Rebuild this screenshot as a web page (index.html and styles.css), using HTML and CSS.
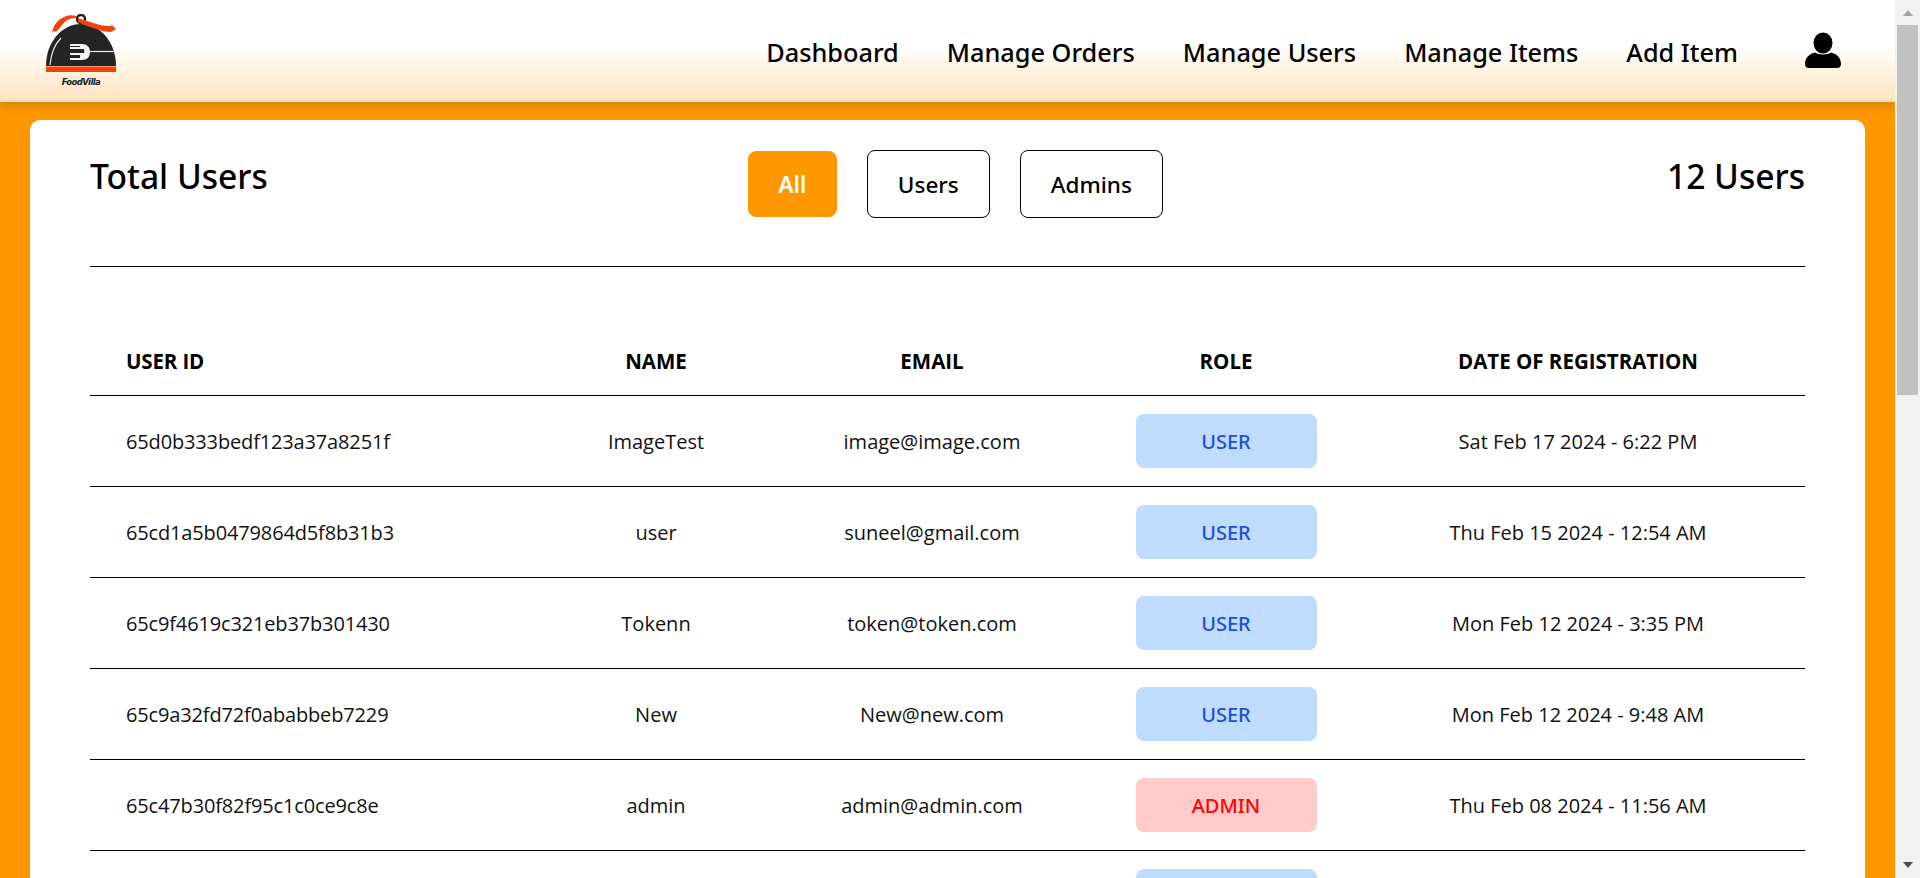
FILE: index.html
```html
<!DOCTYPE html>
<html lang="en">
<head>
    <meta charset="UTF-8">
    <meta name="viewport" content="width=device-width, initial-scale=1.0">
    <title>FoodVilla - Manage Users</title>
    <link rel="stylesheet" href="styles.css">
</head>
<body>
    <div class="page">
        <!-- Top bar -->
        <header class="navbar">
            <a class="logo" href="#">
                <svg class="logo-icon" viewBox="0 0 70 58" width="70" height="58">
                    <path d="M0 52C0 28 16 10 35 10S70 28 70 52Z" fill="#242424"/>
                    <circle cx="35" cy="5" r="4" fill="none" stroke="#222" stroke-width="2.5"/>
                    <path d="M6 19C7 12 11 6 18 3C22 1 26 1 30 2L30 4C25 4 20 6 17 10C14 13 12 16 10 18L8 17Z" fill="#f0440e"/>
                    <path d="M32 4C39 6 46 9 54 11C58 12 62 12 66 12L64 9 70 15 65 18C60 18 55 17 50 15C44 13 38 11 32 8Z" fill="#f0440e"/>
                    <path d="M4 51C5 40 9 30 15 24" fill="none" stroke="#eee" stroke-width="1.2"/>
                    <path d="M24 30H36C41 30 44 33 44 38S41 46 36 46H24V44H34V41H24V39H38C39 37 38 35 37 35H24V33H34V32H24Z" fill="#f4f4f4"/>
                    <path d="M44 37.500H68" stroke="#eee" stroke-width="1.2"/>
                    <rect x="0" y="52.500" width="70" height="5.500" fill="#f0440e"/>
                </svg>
                <span class="logo-text">FoodVilla</span>
            </a>
            <nav class="nav-links">
                <a href="#">Dashboard</a>
                <a href="#">Manage Orders</a>
                <a href="#">Manage Users</a>
                <a href="#">Manage Items</a>
                <a href="#">Add Item</a>
                <a class="user-link" href="#">
                    <svg viewBox="0 0 38 38" width="38" height="38">
                        <ellipse cx="19" cy="11" rx="9.5" ry="10.5" fill="#000"/>
                        <path d="M1 32C1 26 5 22 11 20.500 14 23 24 23 27 20.500 33 22 37 26 37 32 37 35 35 36 33 36H5C3 36 1 35 1 32Z" fill="#000"/>
                    </svg>
                </a>
            </nav>
        </header>

        <main class="content">
            <section class="card">
                <div class="card-head">
                    <h2 class="total-title">Total Users</h2>
                    <div class="filters">
                        <button class="filter active">All</button>
                        <button class="filter">Users</button>
                        <button class="filter">Admins</button>
                    </div>
                    <h2 class="total-count">12 Users</h2>
                </div>

                <table class="users-table">
                    <colgroup>
                        <col class="col-id">
                        <col class="col-name">
                        <col class="col-email">
                        <col class="col-role">
                        <col class="col-date">
                    </colgroup>
                    <thead>
                        <tr>
                            <th class="cell-id">USER ID</th>
                            <th>NAME</th>
                            <th>EMAIL</th>
                            <th>ROLE</th>
                            <th>DATE OF REGISTRATION</th>
                        </tr>
                    </thead>
                    <tbody>
                        <tr>
                            <td class="cell-id">65d0b333bedf123a37a8251f</td>
                            <td>ImageTest</td>
                            <td>image@image.com</td>
                            <td class="cell-role"><span class="role role-user">USER</span></td>
                            <td>Sat Feb 17 2024 - 6:22 PM</td>
                        </tr>
                        <tr>
                            <td class="cell-id">65cd1a5b0479864d5f8b31b3</td>
                            <td>user</td>
                            <td>suneel@gmail.com</td>
                            <td class="cell-role"><span class="role role-user">USER</span></td>
                            <td>Thu Feb 15 2024 - 12:54 AM</td>
                        </tr>
                        <tr>
                            <td class="cell-id">65c9f4619c321eb37b301430</td>
                            <td>Tokenn</td>
                            <td>token@token.com</td>
                            <td class="cell-role"><span class="role role-user">USER</span></td>
                            <td>Mon Feb 12 2024 - 3:35 PM</td>
                        </tr>
                        <tr>
                            <td class="cell-id">65c9a32fd72f0ababbeb7229</td>
                            <td>New</td>
                            <td>New@new.com</td>
                            <td class="cell-role"><span class="role role-user">USER</span></td>
                            <td>Mon Feb 12 2024 - 9:48 AM</td>
                        </tr>
                        <tr>
                            <td class="cell-id">65c47b30f82f95c1c0ce9c8e</td>
                            <td>admin</td>
                            <td>admin@admin.com</td>
                            <td class="cell-role"><span class="role role-admin">ADMIN</span></td>
                            <td>Thu Feb 08 2024 - 11:56 AM</td>
                        </tr>
                        <!-- Only the top of this badge is on screen -->
                        <tr>
                            <td class="cell-id"></td>
                            <td></td>
                            <td></td>
                            <td class="cell-role"><span class="role role-user"></span></td>
                            <td></td>
                        </tr>
                    </tbody>
                </table>
            </section>
        </main>
    </div>

    <!-- Scrollbar as it appears in the screenshot -->
    <div class="scrollbar">
        <span class="arrow arrow-up"></span>
        <div class="track"><div class="thumb"></div></div>
        <span class="arrow arrow-down"></span>
    </div>
</body>
</html>
```

FILE: styles.css
```css
* {
    box-sizing: border-box;
}
html, body {
    height: 100%;
}
body {
    margin: 0;
    display: flex;
    overflow: hidden;
    font-family: "Open Sans", "Noto Sans", Arial, sans-serif;
    color: #000;
    background-color: #ff9800;
}
a {
    color: inherit;
    text-decoration: none;
}
.page {
    flex: 1;
    min-width: 0;
    height: 100%;
    overflow: hidden;
}

/* navbar */
.navbar {
    position: relative;
    height: 102px;
    display: flex;
    justify-content: space-between;
    align-items: flex-start;
    padding: 0 53px 0 46px;
    background: linear-gradient(to bottom, #fff 0%, #fff 45%, #ffe3bd 100%);
    box-shadow: 0 4px 10px rgba(0, 0, 0, 0.16);
}
.logo {
    display: flex;
    flex-direction: column;
    align-items: center;
    width: 70px;
    padding-top: 14px;
}
.logo-icon {
    width: 70px;
    height: 58px;
}
.logo-text {
    margin-top: 5px;
    font-family: "DejaVu Sans", sans-serif;
    font-size: 8.5px;
    line-height: 11px;
    font-weight: 700;
    font-style: italic;
    letter-spacing: -0.6px;
    color: #222;
}
.nav-links {
    display: flex;
    align-items: flex-start;
    gap: 48px;
    padding-top: 34px;
    font-family: "Noto Sans", "Open Sans", Arial, sans-serif;
    font-size: 25.3px;
    line-height: 36px;
    font-weight: 500;
}
.user-link {
    display: flex;
    margin-left: 18px;
    margin-top: -2px;
}

/* card */
.content {
    padding: 18px 30px 0;
}
.card {
    height: 900px;
    padding: 0 60px;
    background-color: #fff;
    border-radius: 10px 10px 0 0;
}
.card-head {
    position: relative;
    height: 147px;
    display: flex;
    justify-content: space-between;
    align-items: flex-start;
    border-bottom: 1px solid #000;
}
.total-title, .total-count {
    margin: 34px 0 0;
    font-family: "Noto Sans", "Open Sans", Arial, sans-serif;
    font-size: 33.600px;
    line-height: 44px;
    font-weight: 500;
}
.filters {
    position: absolute;
    left: 658px;
    top: 30px;
    display: flex;
    align-items: center;
    gap: 30px;
}
.filter {
    height: 68px;
    padding: 0 30px;
    background-color: #fff;
    border: 1px solid #000;
    border-radius: 8px;
    font-family: "Noto Sans", "Open Sans", Arial, sans-serif;
    font-size: 22.5px;
    font-weight: 500;
    color: #000;
}
.filter.active {
    height: 66px;
    padding: 0 29.500px;
    background-color: #ff9800;
    border-color: #ff9800;
    color: #fff;
    font-weight: 600;
}

/* table */
.users-table {
    width: 100%;
    margin-top: 50px;
    border-collapse: collapse;
    table-layout: fixed;
}
.col-id { width: 459px; }
.col-name { width: 214px; }
.col-email { width: 338px; }
.col-role { width: 250px; }
.users-table th, .users-table td {
    border-bottom: 1px solid #000;
    text-align: center;
    padding: 0;
}
.users-table th {
    height: 78px;
    padding-top: 11px;
    font-size: 20.5px;
    font-weight: 700;
}
.users-table td {
    height: 91px;
    padding-top: 2px;
    font-size: 20px;
    color: #111;
}
.users-table .cell-id {
    padding-left: 36px;
    text-align: left;
    letter-spacing: -0.15px;
}
.users-table .cell-role {
    padding-top: 0;
}
.role {
    display: inline-block;
    width: 181px;
    height: 54px;
    padding-top: 2px;
    line-height: 52px;
    border-radius: 8px;
    font-family: "Noto Sans", "Open Sans", Arial, sans-serif;
    font-weight: 500;
    vertical-align: middle;
}
.role-user {
    background-color: #bfdbfe;
    color: #1d4ed8;
}
.role-admin {
    background-color: #ffcaca;
    color: #ff0000;
}

/* scrollbar */
.scrollbar {
    flex: 0 0 25px;
    height: 100%;
    display: flex;
    flex-direction: column;
    align-items: center;
    background-color: #f1f1f1;
}
.track {
    flex: 1;
    width: 100%;
    padding: 0 2px;
}
.thumb {
    height: 370px;
    background-color: #c1c1c1;
}
.arrow {
    width: 0;
    height: 0;
    flex-basis: 6px;
    border-left: 5.500px solid transparent;
    border-right: 5.500px solid transparent;
}
.arrow-up {
    margin-top: 10px;
    margin-bottom: 9px;
    border-bottom: 6px solid #a3a3a3;
}
.arrow-down {
    margin-top: 9px;
    margin-bottom: 10px;
    border-top: 6px solid #505050;
}
```
